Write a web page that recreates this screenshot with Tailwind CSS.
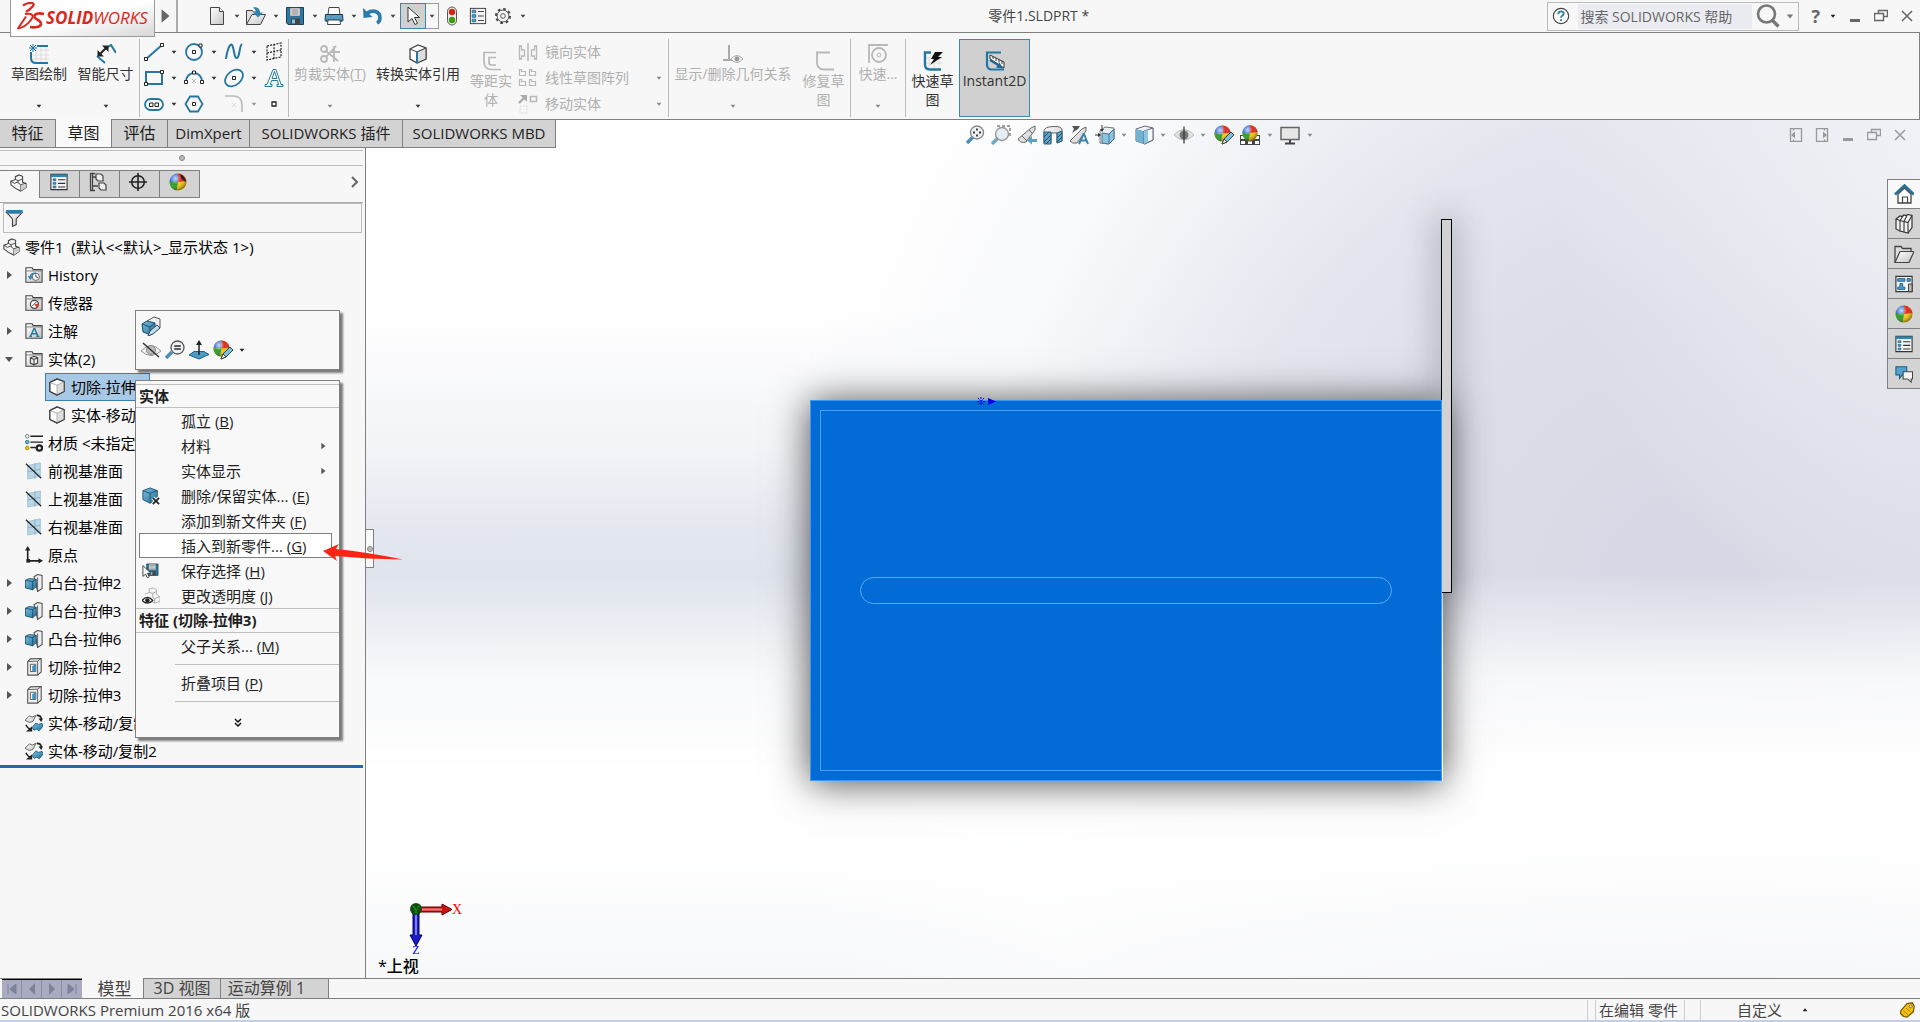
<!DOCTYPE html>
<html lang="zh-CN">
<head>
  <meta charset="UTF-8">
  <title>零件1.SLDPRT - SOLIDWORKS</title>
  <script src="https://cdn.jsdelivr.net/npm/@tailwindcss/browser@4"></script>
</head>
<body class="relative flex h-screen flex-col overflow-hidden bg-[#f7f7f7] font-['Open_Sans','Noto_Sans_CJK_SC',sans-serif] text-[15px] leading-5 text-[#1e1e1e]">

  <!-- icon sprite -->
  <svg class="absolute size-0">
    <defs>
      <linearGradient id="g-paper" x1="0" y1="0" x2="1" y2="1"><stop offset="0" stop-color="#fff"/><stop offset="1" stop-color="#c4c4c4"/></linearGradient>
      <linearGradient id="g-blue" x1="0" y1="0" x2="1" y2="1"><stop offset="0" stop-color="#7cc0e0"/><stop offset="1" stop-color="#256f98"/></linearGradient>
      <radialGradient id="g-shine" cx=".35" cy=".3" r=".7"><stop offset="0" stop-color="#fff" stop-opacity=".75"/><stop offset=".5" stop-color="#fff" stop-opacity="0"/><stop offset="1" stop-color="#000" stop-opacity=".4"/></radialGradient>
    </defs>
    <symbol id="i-down" viewBox="0 0 10 10"><path d="M1 3h8L5 8z" fill="currentColor"/></symbol>
    <symbol id="i-right" viewBox="0 0 10 10"><path d="M3 1l5 4-5 4z" fill="currentColor"/></symbol>
    <symbol id="i-new" viewBox="0 0 20 20"><path d="M3.500 1.500h9l4 4v13h-13z" fill="url(#g-paper)" stroke="#444"/><path d="M12.500 1.500v4h4" fill="#fff" stroke="#444"/></symbol>
    <symbol id="i-open" viewBox="0 0 20 20"><path d="M.5 18.500v-14h6l1 1.500h5V9" fill="#ddd" stroke="#444"/><path d="M.5 18.500L6 8.500h13.500l-5 10z" fill="url(#g-paper)" stroke="#444"/><path d="M7 1.500c5-1 7 2 7 5h3l-5 5-5-5h3c0-2-1-3-3-5z" fill="#2e84ae"/></symbol>
    <symbol id="i-save" viewBox="0 0 20 20"><path d="M1.500 1.500h17v17H3l-1.500-1.500z" fill="#2b78a1" stroke="#1d3f55"/><path d="M5 2h10v8H5z" fill="#eee" stroke="#555" stroke-width=".6"/><path d="M6.500 4h7M6.500 6h7M6.500 8h7" stroke="#777"/><path d="M6 12.500h9v6H6z" fill="#444"/><path d="M7 13.500h3v4H7z" fill="#7cc0e0"/></symbol>
    <symbol id="i-print" viewBox="0 0 20 20"><path d="M5 1.500h10l1 7H4z" fill="#fff" stroke="#444"/><path d="M1.500 8.500h17l.5 6H1z" fill="#5a9dc0" stroke="#234"/><path d="M1.500 13.500h17v2.500h-17z" fill="#256f98"/><path d="M4 14h12l.5 4.500h-13z" fill="#fff" stroke="#444"/></symbol>
    <symbol id="i-undo" viewBox="0 0 20 20"><path d="M4 7c7-4 13-1 13 5 0 2-1 4-3 5" fill="none" stroke="#2b7cab" stroke-width="3.600"/><path d="M0 2l.5 10 9-1z" fill="#2b7cab"/></symbol>
    <symbol id="i-cursor" viewBox="0 0 20 20"><path d="M5 1v15l4-3.500 3 6 2.500-1.200-3-5.800h5z" fill="#fff" stroke="#333"/></symbol>
    <symbol id="i-traffic" viewBox="0 0 20 20"><rect x="5.500" y="1" width="9" height="18" rx="4.500" fill="#eee" stroke="#555"/><circle cx="10" cy="6" r="3.200" fill="#d7260d"/><circle cx="10" cy="14" r="3.200" fill="#3f9b14"/></symbol>
    <symbol id="i-list" viewBox="0 0 20 20"><rect x="1.500" y="1.500" width="17" height="17" fill="#f3f3f3" stroke="#333"/><path d="M3.500 3.500h4v3h-4zM3.500 8.500h4v3h-4zM3.500 13.500h4v3h-4z" fill="#49a0cc" stroke="#1e5f84" stroke-width=".8"/><path d="M10 5h6.500M10 10h6.500M10 15h6.500" stroke="#333"/></symbol>
    <symbol id="i-gear" viewBox="0 0 20 20"><circle cx="10" cy="10" r="7.800" fill="none" stroke="#444" stroke-width="2.200" stroke-dasharray="3 3.120"/><circle cx="10" cy="10" r="6.600" fill="#f4f4f4" stroke="#444"/><circle cx="10" cy="10" r="2.600" fill="#fff" stroke="#444"/></symbol>
    <symbol id="i-help" viewBox="0 0 20 20"><circle cx="10" cy="10" r="8.500" fill="#fff" stroke="#444" stroke-width="1.300"/><path d="M7 8c0-4 6-4 6-.5 0 2-3 2-3 4.500M10 13.500v2" fill="none" stroke="#2a7ba4" stroke-width="2"/></symbol>
    <symbol id="i-search" viewBox="0 0 24 24"><circle cx="10.500" cy="10" r="8.500" fill="none" stroke="#777" stroke-width="2.600"/><path d="M16.500 16.500l6 6" stroke="#777" stroke-width="3.400"/></symbol>
    <symbol id="i-min" viewBox="0 0 14 14"><path d="M2 10h10v3H2z" fill="currentColor"/></symbol>
    <symbol id="i-restore" viewBox="0 0 14 14"><path d="M4.500 4.500v-3h9v6h-4M.5 4.500h9v7h-9z" fill="none" stroke="currentColor" stroke-width="1.400"/></symbol>
    <symbol id="i-close" viewBox="0 0 14 14"><path d="M2 2l10 10M12 2L2 12" stroke="currentColor" stroke-width="1.500"/></symbol>
    <symbol id="i-paneL" viewBox="0 0 14 14"><path d="M1.500.5h11v13h-11zM4.500.5v2M4.500 11.500v2" fill="none" stroke="currentColor" stroke-width="1.300"/><path d="M6 3.500v7L2 7z" fill="currentColor"/></symbol>
    <symbol id="i-paneR" viewBox="0 0 14 14"><path d="M1.500.5h11v13h-11zM9.500.5v2M9.500 11.500v2" fill="none" stroke="currentColor" stroke-width="1.300"/><path d="M8 3.500v7l4-3.500z" fill="currentColor"/></symbol>

    <!-- sketch ribbon -->
    <symbol id="i-sketch" viewBox="0 0 20 20"><path d="M7 1v18M12 1v18M17 1v18M2 6h18M2 11h18M2 15h18" stroke="#ddd"/><path d="M19 2H8M2 8v6q0 5 5 5h12" fill="none" stroke="#2577a2" stroke-width="2"/><path d="M4 0v8M0 4h8M1 1l6 6M7 1L1 7" stroke="#2577a2"/></symbol>
    <symbol id="i-dim" viewBox="0 0 20 20"><path d="M12 3l3-2 5 8M1 12l8 7" fill="none" stroke="#2577a2" stroke-width="2"/><path d="M3 11L11 3" stroke="#222" stroke-width="2"/><path d="M6 1.500h6.500V8zM1.500 6v6.500H8z" fill="#222"/></symbol>
    <symbol id="i-line" viewBox="0 0 20 20"><path d="M2 17L18 3" stroke="#2577a2" stroke-width="2"/><path d="M.5 15.500h3v3h-3zM16.500 1.500h3v3h-3z" fill="#fff" stroke="#222"/></symbol>
    <symbol id="i-circle" viewBox="0 0 20 20"><circle cx="10" cy="10" r="8" fill="none" stroke="#2577a2" stroke-width="1.800"/><path d="M8.500 8.500h3v3h-3zM15 2h3v3h-3z" fill="#fff" stroke="#222"/></symbol>
    <symbol id="i-spline" viewBox="0 0 20 20"><path d="M2 17C3 8 6 1 8 3s2 14 5 13 2-12 5-14" fill="none" stroke="#2577a2" stroke-width="2"/></symbol>
    <symbol id="i-plane" viewBox="0 0 20 20"><path d="M3 4l14-3v14L3 18zM10 2v15M3 11l14-3" fill="none" stroke="#222" stroke-width="1.200" stroke-dasharray="2 1.200"/></symbol>
    <symbol id="i-rect" viewBox="0 0 20 20"><path d="M2 4h16v12H2z" fill="none" stroke="#2577a2" stroke-width="2"/><path d="M.5 14.500h3v3h-3zM16.500 2.500h3v3h-3z" fill="#fff" stroke="#222"/></symbol>
    <symbol id="i-arc" viewBox="0 0 20 20"><path d="M2 14C2 2 18 2 18 14" fill="none" stroke="#2577a2" stroke-width="1.800"/><path d="M8 11l4 4M12 11l-4 4" stroke="#bbb"/><path d="M8.500 3h3v3h-3zM.5 12.500h3v3h-3zM16.500 12.500h3v3h-3z" fill="#fff" stroke="#222"/></symbol>
    <symbol id="i-ellipse" viewBox="0 0 20 20"><ellipse cx="10" cy="10" rx="10" ry="7" transform="rotate(-40 10 10)" fill="none" stroke="#2577a2" stroke-width="1.800"/><path d="M8.500 8.500h3v3h-3z" fill="#fff" stroke="#222"/></symbol>
    <symbol id="i-letter" viewBox="0 0 20 20"><path d="M9 1.500h3l5 15h2v2h-6v-2h1.500l-1-4h-6l-1.200 4H8v2H1v-2h2zM8 10.500h5l-2.500-7z" fill="#fff" stroke="#2577a2"/></symbol>
    <symbol id="i-slot" viewBox="0 0 20 20"><rect x="1" y="5" width="18" height="11" rx="5.500" fill="none" stroke="#2577a2" stroke-width="1.800"/><path d="M5.500 9h3.500v3.500H5.500zM11 9h3.500v3.500H11z" fill="#fff" stroke="#222"/></symbol>
    <symbol id="i-hex" viewBox="0 0 20 20"><path d="M1.500 10L6 2.500h8l4.500 7.500L14 17.500H6z" fill="none" stroke="#2577a2" stroke-width="1.800"/><path d="M8.500 8.500h3v3h-3z" fill="#fff" stroke="#222"/></symbol>
    <symbol id="i-fillet" viewBox="0 0 20 20"><path d="M1 2h8q9 0 9 9v7" fill="none" stroke="#bbb" stroke-width="1.600"/><path d="M8 9l4 4M12 9l-4 4" stroke="#ddd"/></symbol>
    <symbol id="i-point" viewBox="0 0 20 20"><path d="M8 8h4v4H8z" fill="#fff" stroke="#222" stroke-width="1.300"/></symbol>
    <symbol id="i-trim" viewBox="0 0 20 20"><g fill="none" stroke="#b8b8b8" stroke-width="1.800"><circle cx="4" cy="5" r="3"/><circle cx="4" cy="15" r="3"/><path d="M6 13L16 2M6 7l12 10M10 8h10M14 2v16"/></g></symbol>
    <symbol id="i-convert" viewBox="0 0 20 20"><path d="M2 5l8-4 8 3v11l-9 4-7-4z" fill="#fff" stroke="#444" stroke-width="1.300"/><path d="M2 5l7 3 9-4" fill="none" stroke="#444"/><path d="M9 8l9-4v11l-9 4z" fill="#ddd" stroke="#444"/><path d="M9 8v11" stroke="#2577a2" stroke-width="2"/></symbol>
    <symbol id="i-offset" viewBox="0 0 20 20"><path d="M15 1.500H3v9q0 8 8 8h9M15 6.500H8v5q0 2.500 3 2.500h4" fill="none" stroke="#b8b8b8" stroke-width="1.700"/></symbol>
    <symbol id="i-mirror" viewBox="0 0 20 20"><path d="M10 1v18" stroke="#b8b8b8" stroke-width="1.500"/><path d="M1.500 4h2v4h3v6h-3v3h-2zM18.500 4h-2v4h-3v6h3v3h2z" fill="none" stroke="#b8b8b8" stroke-width="1.300"/></symbol>
    <symbol id="i-pattern" viewBox="0 0 20 20"><path d="M1.500 1.500h2v2h4v4h-6zM11.500 1.500h2v2h4v4h-6zM1.500 11.500h2v2h4v4h-6zM11.500 11.500h2v2h4v4h-6z" fill="none" stroke="#b8b8b8" stroke-width="1.200"/></symbol>
    <symbol id="i-move" viewBox="0 0 20 20"><path d="M1 9l5-5" stroke="#aaa" stroke-width="2.400"/><path d="M2 1h7v7z" fill="#aaa"/><path d="M12.500 2.500h6v5h-6z" fill="none" stroke="#b8b8b8" stroke-width="1.600"/><path d="M2 12h7v7H2z" fill="none" stroke="#ddd" stroke-dasharray="2 1"/></symbol>
    <symbol id="i-relation" viewBox="0 0 20 20"><path d="M6 1v15M0 16h10" stroke="#aaa" stroke-width="2"/><path d="M8 15q6-7 12 0-6 7-12 0z" fill="#f7f7f7" stroke="#aaa"/><circle cx="14" cy="15" r="2.400" fill="#999"/></symbol>
    <symbol id="i-repair" viewBox="0 0 20 20"><path d="M16 1.500H3v10q0 7 7 7h10" fill="none" stroke="#b8b8b8" stroke-width="1.800"/></symbol>
    <symbol id="i-snap" viewBox="0 0 20 20"><path d="M1 19V1h19" fill="none" stroke="#b8b8b8" stroke-width="1.800"/><circle cx="11" cy="11" r="7" fill="none" stroke="#b8b8b8" stroke-width="1.800"/><circle cx="11" cy="11" r="2" fill="none" stroke="#b8b8b8"/></symbol>
    <symbol id="i-rapid" viewBox="0 0 20 20"><path d="M6 5v14M11 5v14M16 5v14M4 7h16M4 12h16" stroke="#ddd"/><path d="M8 1.500H2v12q0 5 5 5h11" fill="none" stroke="#2577a2" stroke-width="2.400"/><path d="M12 1h8l-5 5h4L7 14l4-6H8z" fill="#111"/></symbol>
    <symbol id="i-instant" viewBox="0 0 20 20"><path d="M16 1.500H2v12q0 5 5 5h12" fill="none" stroke="#2577a2" stroke-width="2.200"/><path d="M5 4l14 7v6L5 8z" fill="#fff" stroke="#333"/><path d="M8 5.500V8M11 7v3M14 8.500v3M17 10v3" stroke="#333"/><path d="M5 9l10 6" stroke="#1e6690" stroke-width="2.200"/><path d="M18 17.500l-7-1 3.500-5z" fill="#1e6690"/></symbol>

    <!-- view toolbar -->
    <symbol id="i-zoomfit" viewBox="0 0 20 20"><path d="M2 18l6-6" stroke="#4d8fb3" stroke-width="3.500"/><circle cx="12" cy="7.500" r="6.500" fill="#eef2f5" stroke="#8a8a8a" stroke-width="1.400"/><path d="M12 3.500v2M12 9.500v2M8 7.500h2M14 7.500h2" stroke="#333" stroke-width="1.800"/></symbol>
    <symbol id="i-zoomarea" viewBox="0 0 20 20"><path d="M6 1h13v12" fill="none" stroke="#444" stroke-dasharray="3 2"/><path d="M1 19l6-6" stroke="#6fa8c6" stroke-width="3.500"/><circle cx="11" cy="9" r="6.500" fill="#e6edf2" stroke="#999" stroke-width="1.400"/></symbol>
    <symbol id="i-prev" viewBox="0 0 20 20"><path d="M1 14L14 3l4-2v4L9 17q-5 2-8-3z" fill="url(#g-paper)" stroke="#666"/><path d="M5 11l5 5M12 5l3 3" stroke="#666"/><path d="M20 14h-5v-3l-5 4.500 5 4V17h5z" fill="#5f9fbf"/></symbol>
    <symbol id="i-section" viewBox="0 0 20 20"><path d="M1 6q0-4 9-4.500T19 5v11l-5 2V8H8v10H1z" fill="url(#g-paper)" stroke="#666"/><path d="M1 7h7v12H1zM14 8l5-2v10l-5 2z" fill="#5fa3c6" stroke="#2b5f7c"/><path d="M1 12l5-5M1 17l7-7M3 19l5-5M14 13l5-5M14 17l5-5" stroke="#20506c"/></symbol>
    <symbol id="i-dynview" viewBox="0 0 20 20"><path d="M1 16L13 4l4-2v4L8 18q-5 1-7-2z" fill="url(#g-paper)" stroke="#666"/><path d="M3 1h8L9 4l-6 4 2-4z" fill="#555"/><path d="M10 19L14.500 9h.5l4 10M11.500 15.500h6" stroke="#3c84ab" stroke-width="2" fill="none"/></symbol>
    <symbol id="i-orient" viewBox="0 0 20 20"><path d="M5 6l5-4 9 1v11l-5 5-9-1z" fill="#e8eef2" stroke="#777"/><path d="M7 8l7 1 5-5v10l-5 5-7-1z" fill="#8cc3de" stroke="#4b7890"/><path d="M14 9v10" stroke="#4b7890"/><path d="M7 0v4M0 10h4" stroke="#333"/><path d="M5 4h4L7 7zM3 8v4l3-2z" fill="#333"/></symbol>
    <symbol id="i-display" viewBox="0 0 20 20"><path d="M2 4l9-3 8 2v12l-8 4-9-3z" fill="#eef4f7" stroke="#667"/><path d="M2 4l8 2v13l-8-3z" fill="#6fb2d2"/><path d="M10 6l9-3v12l-9 4z" fill="#f5fafc" stroke="#667"/><path d="M10 6l4-1.500V17l-4 2z" fill="#8cc6e0"/></symbol>
    <symbol id="i-eye" viewBox="0 0 20 20"><path d="M0 10q10-11 20 0-10 10-20 0z" fill="#e2e2e2" stroke="#bbb"/><circle cx="10" cy="10" r="4.500" fill="#777"/><path d="M10 1.500v17" stroke="#333" stroke-width="1.200"/></symbol>
    <symbol id="i-ball" viewBox="0 0 20 20"><circle cx="10" cy="10" r="8.500" fill="#f2c511"/><path d="M10 10V1.500A8.500 8.500 0 0 1 18.500 9z" fill="#dd2a1b"/><path d="M10 10V1.500A8.500 8.500 0 0 0 1.500 10z" fill="#2f68d8"/><path d="M10 10H1.500a8.500 8.500 0 0 0 7 8.400z" fill="#2c9c2c"/><circle cx="10" cy="10" r="8.500" fill="url(#g-shine)"/></symbol>
    <symbol id="i-ballpen" viewBox="0 0 20 20"><use href="#i-ball" x="-1" y="-1" width="19" height="19"/><path d="M8 19l2-5 7-7 3 3-7 7z" fill="#7cc0e0" stroke="#345"/><path d="M8 19l2-5 3 3z" fill="#eee" stroke="#444"/></symbol>
    <symbol id="i-scene" viewBox="0 0 20 20"><path d="M0 10h20v10H0z" fill="#444"/><path d="M1 11h4v3H1zM1 16h4v3H1zM15 11h4v3h-4zM15 16h4v3h-4zM8 16.500h4V19H8z" fill="#fff"/><use href="#i-ball" x="1" y="-1" width="18" height="18"/></symbol>
    <symbol id="i-monitor" viewBox="0 0 20 20"><path d="M1 2.500h18v12H1z" fill="#e6e6e6" stroke="#666" stroke-width="1.500"/><path d="M10 15v3M5 18.500h10" stroke="#444" stroke-width="2"/></symbol>

    <!-- feature tree -->
    <symbol id="i-part" viewBox="0 0 20 20"><path d="M1 8l5-2V3l4-2 4 1.500V9l4 2v4l-6 4-6-3-5-4z" fill="#f1f1f1" stroke="#444" stroke-width="1.200"/><path d="M1 8l4 2.500L8 9l4 3v7M6 6l3 1.500 5-2M9 7.500V10M12 12l6-2" fill="none" stroke="#444"/><path d="M12 13l6-2v4l-6 4z" fill="#ccc"/></symbol>
    <symbol id="i-props" viewBox="0 0 20 20"><path d="M1 1.500h18v17H1z" fill="#f3f3f3" stroke="#333" stroke-width="1.200"/><path d="M1 1.500h18v3H1z" fill="#2f86b2"/><path d="M3.500 6.500h3v2h-3zM3.500 10.500h3v2h-3zM3.500 14.500h3v2h-3z" fill="#49a0cc" stroke="#1e5f84" stroke-width=".8"/><path d="M9 7.500h8M9 11.500h8M9 15.500h8" stroke="#333" stroke-width="1.200"/></symbol>
    <symbol id="i-config" viewBox="0 0 20 20"><path d="M7 1.500H2.500v17H7M4.500 1.500v17M5 14h5M5 5h4" fill="none" stroke="#444" stroke-width="1.300"/><path d="M8 2h5l2 2v5h-5L8 7zM11 11h5l2 2v5h-5l-2-2z" fill="#eee" stroke="#444" stroke-width="1.200"/></symbol>
    <symbol id="i-target" viewBox="0 0 20 20"><circle cx="10" cy="10" r="7" fill="none" stroke="#222" stroke-width="1.800"/><path d="M10 0v20M0 10h20" stroke="#222" stroke-width="1.800"/></symbol>
    <symbol id="i-appear" viewBox="0 0 20 20"><use href="#i-ball" width="20" height="20"/><path d="M12 2q5 2 6 8-5-2-6-8z" fill="#222"/></symbol>
    <symbol id="i-filter" viewBox="0 0 20 20"><path d="M1.500 4h17L12 11v6l-4 2v-8z" fill="url(#g-paper)" stroke="#444" stroke-width="1.200"/><path d="M1 1.500h18l-1 4H2z" fill="#2a7fab"/></symbol>
    <symbol id="i-folder" viewBox="0 0 20 20"><path d="M1 18V2h7l1 2h10v14z" fill="url(#g-paper)" stroke="#444" stroke-width="1.200"/><path d="M1 5.500h18" stroke="#777"/></symbol>
    <symbol id="i-history" viewBox="0 0 20 20"><use href="#i-folder" width="20" height="20"/><circle cx="12" cy="12" r="4" fill="#fff" stroke="#555"/><path d="M12 9.500V12l2.500 1" stroke="#333" fill="none"/><path d="M12 8q-6 0-6 4" fill="none" stroke="#2a7fab" stroke-width="1.800"/><path d="M3 11.500h6l-3 4z" fill="#2a7fab"/></symbol>
    <symbol id="i-sensor" viewBox="0 0 20 20"><use href="#i-folder" width="20" height="20"/><circle cx="10.500" cy="11.500" r="4.500" fill="#fff" stroke="#444" stroke-width="1.300"/><path d="M10.500 11.500l2.500 4a4.500 4.500 0 0 0 2-5z" fill="#d9432b"/><path d="M8 13.500l5-5" stroke="#333"/></symbol>
    <symbol id="i-anno" viewBox="0 0 20 20"><use href="#i-folder" width="20" height="20"/><path d="M6 16L10 7.500h.8L14.500 16M7.500 13h6M4.800 16h3M12.500 16H16" fill="none" stroke="#2577a2" stroke-width="1.600"/></symbol>
    <symbol id="i-bodies" viewBox="0 0 20 20"><use href="#i-folder" width="20" height="20"/><path d="M6 8.500L10 7l4 1.500v6l-4 2-4-2zM6 8.500l4 2 4-2M10 10.500v6" fill="#eee" stroke="#444" stroke-width="1.200"/></symbol>
    <symbol id="i-body" viewBox="0 0 20 20"><path d="M2 5l8-4 8 3v11l-8 4-8-4z" fill="#fff" stroke="#444" stroke-width="1.200"/><path d="M10 8l8-4v11l-8 4z" fill="#ddd"/><path d="M2 5l8 3 8-4M10 8v11" fill="none" stroke="#aaa"/><path d="M2 5l8-4 8 3v11l-8 4-8-4z" fill="none" stroke="#444" stroke-width="1.200"/></symbol>
    <symbol id="i-material" viewBox="0 0 20 20"><path d="M6 2.500h14M6 9h14M6 15h6" stroke="#222" stroke-width="1.500"/><circle cx="2.500" cy="2.500" r="2" fill="#eee" stroke="#777"/><circle cx="2.500" cy="9" r="2" fill="#5ab4dc" stroke="#377"/><circle cx="2.500" cy="15.500" r="2" fill="#f0c020" stroke="#a80"/><circle cx="16" cy="15.500" r="3" fill="none" stroke="#222" stroke-width="2.500"/></symbol>
    <symbol id="i-refplane" viewBox="0 0 20 20"><path d="M3 4l14-3v15L3 19z" fill="#b9d6e6" stroke="#9dbfd1"/><path d="M11 1v18M3 11l14-3" stroke="#7fa5ba" stroke-width=".8"/><path d="M1 2l17 16" stroke="#222" stroke-width="1.300"/></symbol>
    <symbol id="i-origin" viewBox="0 0 20 20"><path d="M3 4v12.500h13" fill="none" stroke="#222" stroke-width="1.800"/><path d="M0 5l3-5 3 5zM15 13.500l5 3-5 3z" fill="#222"/><path d="M1.500 14.500h4v4h-4z" fill="#222"/></symbol>
    <symbol id="i-boss" viewBox="0 0 20 20"><path d="M10 3l4-2.500 5 1V16l-5 3.500z" fill="#eee" stroke="#555" stroke-width="1.200"/><path d="M14 4v15" stroke="#555"/><path d="M.5 7l4-2 8 1v8l-4 3.500-8-2z" fill="url(#g-blue)" stroke="#1d4f6c"/><path d="M.5 7l8 1.500 4-2.500M8.500 8.500v9" fill="none" stroke="#1d4f6c"/></symbol>
    <symbol id="i-cut" viewBox="0 0 20 20"><path d="M3 4l3-3 12-.5v15L14 19H3z" fill="#eee" stroke="#555" stroke-width="1.200"/><path d="M3 4l11-.5L18 .5M14 3.500V19" fill="none" stroke="#555"/><path d="M6 7h6v8H6z" fill="#fff" stroke="#555"/><path d="M8 9l4-2v8H8z" fill="#3b94c0"/></symbol>
    <symbol id="i-movecopy" viewBox="0 0 20 20"><path d="M0 7l5-5 3 1.500 4-2-3 6.500-4 1.500-2-1z" fill="url(#g-paper)" stroke="#555"/><path d="M8 15l4-5 3 1.500 4-1 1 3-4 5-3-1.500-3 1z" fill="url(#g-blue)" stroke="#1e5f84"/><path d="M13 1.500q5 0 5 4" fill="none" stroke="#222" stroke-width="1.800"/><path d="M15 5h5l-2 4zM1 19.500h7v-6z" fill="#222"/><path d="M1 12q1 3 5 5" stroke="#222" stroke-width="1.600" fill="none"/></symbol>

    <!-- context menu and task pane -->
    <symbol id="i-editfeat" viewBox="0 0 20 20"><path d="M6 5l7-4 6 2v9l-6 4z" fill="#eee" stroke="#555"/><path d="M1 8l5-3 8 2v8l-4 4-8-3z" fill="url(#g-blue)" stroke="#1d4f6c"/><path d="M1 8l8 3 5-4M9 11v7" fill="none" stroke="#1d4f6c"/><path d="M7 20l2-5 7-6 3 3-7 6z" fill="#bfe0ef" stroke="#345"/></symbol>
    <symbol id="i-hide" viewBox="0 0 20 20"><path d="M0 11q10-11 20 0-10 9-20 0z" fill="#eee" stroke="#999"/><circle cx="10" cy="10" r="4.500" fill="#bbb" stroke="#888"/><path d="M2 3l16 14" stroke="#333" stroke-width="1.500"/></symbol>
    <symbol id="i-zoomsel" viewBox="0 0 20 20"><path d="M1 18l6-6" stroke="#4d8fb3" stroke-width="3.500"/><circle cx="12.500" cy="7.500" r="6.500" fill="#eef2f5" stroke="#555" stroke-width="1.300"/><path d="M9.500 5.500h6v1h-6zM9.500 8.500h6v1h-6z" fill="#333" stroke="#333" stroke-width=".6"/></symbol>
    <symbol id="i-normal" viewBox="0 0 20 20"><path d="M0 15l5-3.500h10l5 3L10 19z" fill="#4c9cc4" stroke="#1e5f84"/><path d="M10 15V3" stroke="#222" stroke-width="1.500"/><path d="M7 5l3-5 3 5z" fill="#222"/></symbol>
    <symbol id="i-delbody" viewBox="0 0 20 20"><path d="M1 4l8-3 8 3v10l-8 4-8-4z" fill="url(#g-blue)" stroke="#1d4f6c"/><path d="M1 4l8 3 8-3M9 7v11" fill="none" stroke="#1d4f6c"/><path d="M12 12l7 7M19 12l-7 7" stroke="#fff" stroke-width="4"/><path d="M12 12l7 7M19 12l-7 7" stroke="#222" stroke-width="2"/></symbol>
    <symbol id="i-savesel" viewBox="0 0 20 20"><use href="#i-save" x="4" y="1" width="15" height="15"/><path d="M1 4v12l3-2.500 2 4 2-1-2-4h4z" fill="#fff" stroke="#333"/></symbol>
    <symbol id="i-transp" viewBox="0 0 20 20"><path d="M3 8l5-2V2l5-1 3 2v5l4 3v5l-6 2-5-3" fill="#f5f5f5" stroke="#aaa"/><path d="M8 6l4 1 4-2M12 7v5l2 1 5-2M14 13v5" fill="none" stroke="#aaa"/><path d="M0 15q6-7 12 0-6 6-12 0z" fill="#fff" stroke="#222" stroke-width="1.300"/><circle cx="6" cy="15" r="2.500" fill="#222"/></symbol>
    <symbol id="i-home" viewBox="0 0 20 20"><path d="M4 10v9h13v-9l-6.500-6z" fill="#fff" stroke="#444" stroke-width="1.300"/><path d="M8.500 19v-6h5v6" fill="none" stroke="#444" stroke-width="1.200"/><path d="M1 10.500l9.500-9 9.500 9" fill="none" stroke="#256f98" stroke-width="2.600"/></symbol>
    <symbol id="i-library" viewBox="0 0 20 20"><path d="M2 5l4-3 2 .5L10 1l2 .5 2-1 4 1v12l-4 5.500-4-1-4-1-4-2z" fill="#f2f2f2" stroke="#333" stroke-width="1.200"/><path d="M2 5l4 1.500 4 1 4 1 4-7M6 6.500v11M10 7.500v11M14 8.500V19M6 6.500l3-4.500M10 7.500l3-6" fill="none" stroke="#333" stroke-width="1.100"/></symbol>
    <symbol id="i-explorer" viewBox="0 0 20 20"><path d="M1 18.500v-16h6l1.500 2H17v3" fill="#ddd" stroke="#444" stroke-width="1.300"/><path d="M1 18.500L6 7.500h14l-5 11z" fill="url(#g-paper)" stroke="#444" stroke-width="1.200"/></symbol>
    <symbol id="i-palette" viewBox="0 0 20 20"><path d="M1 1.500h18v17H1z" fill="#f3f3f3" stroke="#333" stroke-width="1.300"/><path d="M3 4h8v3H3zM13.500 4h3.500v3h-3.500zM5.500 9.500h3v4H11v2.500H3v-2.500h2.500z" fill="#49a0cc" stroke="#1e5f84"/><path d="M15 10h4v8.500h-4z" fill="#bbb" stroke="#333"/></symbol>
    <symbol id="i-forum" viewBox="0 0 20 20"><path d="M1 2h12v9H8l-3 4v-4H1z" fill="#4fa5cf" stroke="#1e5f84" stroke-width="1.200"/><path d="M9 7.500h10.500v8H18V19l-4-3.500H9z" fill="#f3f3f3" stroke="#444" stroke-width="1.200"/></symbol>
    <symbol id="i-tag" viewBox="0 0 20 20"><path d="M3 11l7-8 6-1 2 4-1 6-7 6q-4 0-7-4z" fill="#f4c20d" stroke="#7c5b00" stroke-width="1.400"/><circle cx="14" cy="6" r="1.600" fill="#fff" stroke="#7c5b00"/><path d="M6 11l5 4M9 8l5 4" stroke="#a87e00"/></symbol>
  </svg>

  <!-- title bar -->
  <header class="flex h-[33px] shrink-0 items-center border-b border-[#808080] text-[#444]">
    <div class="z-10 ml-[10px] flex h-[37px] w-[145px] items-center self-start border border-t-0 border-[#999] bg-linear-to-br from-white from-50% to-[#d8d8d8] pl-1 text-[#d9291c]">
      <svg class="h-8 w-[30px] shrink-0" viewBox="0 0 30 32" fill="none" stroke="#d9291c" stroke-linejoin="round"><path d="M8 3.500C13 0 21 0 18 4c-1.500 2-4 4-7 6" stroke-width="2.200"/><path d="M10 12c9-1.500 9 3 5 7-3 4-7 6.500-12 7.500l8-12" stroke-width="2"/><path d="M29 12c-6-1.500-10 0-9.500 3 .5 2.500 7 3.500 6.500 7-.5 3-6 4-11 3" stroke-width="2.600"/></svg>
      <span class="ml-px text-[17px] leading-5 italic"><b>SOLID</b>WORKS</span>
    </div>
    <button aria-label="菜单" class="flex h-8 w-[23px] items-center justify-center border-r-2 border-[#aaa] pr-0.5 text-[#666]"><svg class="h-4 w-3" viewBox="0 0 10 14"><path d="M2 1l7 6-7 6z" fill="currentColor"/></svg></button>
    <nav class="ml-[27px] flex items-center text-[#444]">
      <button aria-label="新建" class="flex w-6 justify-center"><svg class="size-5"><use href="#i-new"/></svg></button>
      <button aria-label="新建选项" class="flex w-[15px] justify-center"><svg class="size-1.5"><use href="#i-down"/></svg></button>
      <button aria-label="打开" class="flex w-6 justify-center"><svg class="size-5"><use href="#i-open"/></svg></button>
      <button aria-label="打开选项" class="flex w-[15px] justify-center"><svg class="size-1.5"><use href="#i-down"/></svg></button>
      <button aria-label="保存" class="flex w-6 justify-center"><svg class="size-5"><use href="#i-save"/></svg></button>
      <button aria-label="保存选项" class="flex w-[15px] justify-center"><svg class="size-1.5"><use href="#i-down"/></svg></button>
      <button aria-label="打印" class="flex w-6 justify-center"><svg class="size-5"><use href="#i-print"/></svg></button>
      <button aria-label="打印选项" class="flex w-[15px] justify-center"><svg class="size-1.5"><use href="#i-down"/></svg></button>
      <button aria-label="撤消" class="flex w-6 justify-center"><svg class="size-5"><use href="#i-undo"/></svg></button>
      <button aria-label="撤消选项" class="flex w-[15px] justify-center"><svg class="size-1.5"><use href="#i-down"/></svg></button>
      <button aria-label="选择" class="flex h-[26px] w-[26px] items-center justify-center border border-[#3f87b3] bg-[#d0d0d0]"><svg class="size-5"><use href="#i-cursor"/></svg></button>
      <button aria-label="选择选项" class="flex h-[26px] w-[13px] items-center justify-center border border-l-0 border-[#999]"><svg class="size-1.5"><use href="#i-down"/></svg></button>
      <button aria-label="重建模型" class="flex w-[26px] justify-center"><svg class="size-5"><use href="#i-traffic"/></svg></button>
      <button aria-label="文件属性" class="flex w-[26px] justify-center"><svg class="size-[18px]"><use href="#i-list"/></svg></button>
      <button aria-label="选项" class="flex w-6 justify-center"><svg class="size-[18px]"><use href="#i-gear"/></svg></button>
      <button aria-label="更多选项" class="flex w-[15px] justify-center"><svg class="size-1.5"><use href="#i-down"/></svg></button>
    </nav>
    <h1 class="flex-1 text-center text-sm">零件1.SLDPRT *</h1>
    <form class="flex h-[29px] w-[252px] items-center border border-[#bbb]">
      <svg class="ml-1 size-[18px]"><use href="#i-help"/></svg>
      <input type="text" aria-label="搜索帮助" placeholder="搜索 SOLIDWORKS 帮助" class="ml-2 h-[25px] w-[174px] bg-[#ebecf1] pl-0.5 text-sm placeholder:text-[#666]">
      <button type="button" aria-label="搜索" class="ml-1"><svg class="size-6"><use href="#i-search"/></svg></button>
      <button type="button" aria-label="搜索选项" class="ml-1.5 text-[#777]"><svg class="size-2"><use href="#i-down"/></svg></button>
    </form>
    <div class="flex items-center pr-1.5 pl-3 text-[#666]">
      <button aria-label="帮助" class="text-lg font-bold">?</button>
      <button aria-label="帮助选项" class="ml-2.5 text-[#222]"><svg class="size-1.5"><use href="#i-down"/></svg></button>
      <button aria-label="最小化" class="ml-3"><svg class="size-3.5"><use href="#i-min"/></svg></button>
      <button aria-label="还原" class="ml-3"><svg class="size-3.5"><use href="#i-restore"/></svg></button>
      <button aria-label="关闭" class="ml-3"><svg class="size-3.5"><use href="#i-close"/></svg></button>
    </div>
  </header>

  <!-- ribbon -->
  <section class="flex h-[87px] shrink-0 border-r border-b border-[#808080] pl-1.5 text-sm leading-5 text-[#333]">
    <button class="flex w-[66px] flex-col items-center pt-[11px] pb-2.5"><svg class="size-5 shrink-0"><use href="#i-sketch"/></svg>草图绘制<svg class="mt-auto size-1.5"><use href="#i-down"/></svg></button>
    <button class="flex w-[67px] flex-col items-center pt-[11px] pb-2.5"><svg class="size-5 shrink-0"><use href="#i-dim"/></svg>智能尺寸<svg class="mt-auto size-1.5"><use href="#i-down"/></svg></button>
    <div class="mt-1.5 mb-0.5 border-l border-[#bbb]"></div>
    <div class="ml-1 grid grid-cols-[repeat(7,20px)] grid-rows-[repeat(3,26px)] place-items-center pt-1.5">
      <button aria-label="直线"><svg class="size-5"><use href="#i-line"/></svg></button>
      <button aria-label="直线选项"><svg class="size-1.5"><use href="#i-down"/></svg></button>
      <button aria-label="圆"><svg class="size-5"><use href="#i-circle"/></svg></button>
      <button aria-label="圆选项"><svg class="size-1.5"><use href="#i-down"/></svg></button>
      <button aria-label="样条曲线"><svg class="size-5"><use href="#i-spline"/></svg></button>
      <button aria-label="样条曲线选项"><svg class="size-1.5"><use href="#i-down"/></svg></button>
      <button aria-label="基准面"><svg class="size-5"><use href="#i-plane"/></svg></button>
      <button aria-label="矩形"><svg class="size-5"><use href="#i-rect"/></svg></button>
      <button aria-label="矩形选项"><svg class="size-1.5"><use href="#i-down"/></svg></button>
      <button aria-label="圆弧"><svg class="size-5"><use href="#i-arc"/></svg></button>
      <button aria-label="圆弧选项"><svg class="size-1.5"><use href="#i-down"/></svg></button>
      <button aria-label="椭圆"><svg class="size-5"><use href="#i-ellipse"/></svg></button>
      <button aria-label="椭圆选项"><svg class="size-1.5"><use href="#i-down"/></svg></button>
      <button aria-label="文字"><svg class="size-5"><use href="#i-letter"/></svg></button>
      <button aria-label="槽口"><svg class="size-5"><use href="#i-slot"/></svg></button>
      <button aria-label="槽口选项"><svg class="size-1.5"><use href="#i-down"/></svg></button>
      <button aria-label="多边形"><svg class="size-5"><use href="#i-hex"/></svg></button>
      <span></span>
      <button aria-label="圆角"><svg class="size-5"><use href="#i-fillet"/></svg></button>
      <button aria-label="圆角选项" class="text-[#999]"><svg class="size-1.5"><use href="#i-down"/></svg></button>
      <button aria-label="点"><svg class="size-5"><use href="#i-point"/></svg></button>
    </div>
    <div class="mt-1.5 mb-0.5 ml-1 border-l border-[#bbb]"></div>
    <button class="flex w-[82px] flex-col items-center pt-[11px] pb-2.5 text-[#b0b0b0]"><svg class="size-5 shrink-0"><use href="#i-trim"/></svg><span>剪裁实体(<u>T</u>)</span><svg class="mt-auto size-1.5 text-[#888]"><use href="#i-down"/></svg></button>
    <button class="flex w-[94px] flex-col items-center pt-[11px] pb-2.5"><svg class="size-5 shrink-0"><use href="#i-convert"/></svg>转换实体引用<svg class="mt-auto size-1.5"><use href="#i-down"/></svg></button>
    <button class="flex w-[52px] flex-col items-center px-1 pt-[18px] leading-[19px] text-[#b0b0b0]"><svg class="size-5 shrink-0"><use href="#i-offset"/></svg>等距实体</button>
    <div class="flex w-[151px] flex-col pt-1.5 pl-px text-[#b0b0b0]">
      <button class="flex h-[26px] items-center gap-[7px]"><svg class="size-5"><use href="#i-mirror"/></svg>镜向实体</button>
      <button class="flex h-[26px] items-center gap-[7px]"><svg class="size-5"><use href="#i-pattern"/></svg>线性草图阵列<svg class="mr-1.5 ml-auto size-1.5 text-[#888]"><use href="#i-down"/></svg></button>
      <button class="flex h-[26px] items-center gap-[7px]"><svg class="size-5"><use href="#i-move"/></svg>移动实体<svg class="mr-1.5 ml-auto size-1.5 text-[#888]"><use href="#i-down"/></svg></button>
    </div>
    <div class="mt-1.5 mb-0.5 border-l border-[#bbb]"></div>
    <button class="flex w-32 flex-col items-center pt-[11px] pb-2.5 text-[#b0b0b0]"><svg class="size-5 shrink-0"><use href="#i-relation"/></svg>显示/删除几何关系<svg class="mt-auto size-1.5 text-[#888]"><use href="#i-down"/></svg></button>
    <button class="flex w-[53px] flex-col items-center px-1 pt-[18px] leading-[19px] text-[#b0b0b0]"><svg class="size-5 shrink-0"><use href="#i-repair"/></svg>修复草图</button>
    <div class="mt-1.5 mb-0.5 border-l border-[#bbb]"></div>
    <button class="flex w-[54px] flex-col items-center pt-[11px] pb-2.5 text-[#b0b0b0]"><svg class="size-5 shrink-0"><use href="#i-snap"/></svg>快速...<svg class="mt-auto size-1.5 text-[#888]"><use href="#i-down"/></svg></button>
    <div class="mt-1.5 mb-0.5 border-l border-[#bbb]"></div>
    <button class="flex w-[53px] flex-col items-center px-1 pt-[18px] leading-[19px]"><svg class="size-5 shrink-0"><use href="#i-rapid"/></svg>快速草图</button>
    <button class="mt-1.5 mb-0.5 flex w-[71px] flex-col items-center border border-[#3f87b3] bg-[#d0d0d0] pt-[11px] leading-[19px]"><svg class="size-5 shrink-0"><use href="#i-instant"/></svg>Instant2D</button>
  </section>

  <main class="relative flex min-h-0 flex-1">
    <!-- command tabs, over the panel and the viewport -->
    <nav class="absolute top-0 left-0 z-10 flex h-7 border-b border-[#808080] text-base leading-[27px]">
      <button class="w-14 border-r border-[#808080] bg-[#d3d3d3]">特征</button>
      <button class="-mt-px w-[55px] bg-[#f9f9f9] pt-px">草图</button>
      <button class="w-[57px] border-x border-[#808080] bg-[#d3d3d3]">评估</button>
      <button class="w-[82px] border-r border-[#808080] bg-[#d3d3d3] text-[15px]">DimXpert</button>
      <button class="w-[153px] border-r border-[#808080] bg-[#d3d3d3] text-[15px]">SOLIDWORKS 插件</button>
      <button class="w-[153px] border-r border-[#808080] bg-[#d3d3d3] text-[15px]">SOLIDWORKS MBD</button>
    </nav>

    <!-- feature manager -->
    <aside class="flex w-[366px] shrink-0 flex-col border-r border-[#808080] pt-[30px]">
      <div class="mr-0.5 flex h-4 items-center justify-center border-y border-[#bbb]"><span class="size-1.5 rounded-full border border-[#888] bg-[#bbb]"></span></div>
      <div class="mt-1 mr-0.5 flex h-[33px] items-start border-b border-[#aaa]">
        <button aria-label="特征树" class="flex h-7 w-[39px] items-center justify-center border-t border-[#808080] pr-0.5 pb-1"><svg class="size-[18px]"><use href="#i-part"/></svg></button>
        <button aria-label="属性" class="flex h-7 w-[41px] items-center justify-center border border-[#808080] bg-[#d3d3d3] pr-0.5 pb-1"><svg class="size-[18px]"><use href="#i-props"/></svg></button>
        <button aria-label="配置" class="flex h-7 w-10 items-center justify-center border border-l-0 border-[#808080] bg-[#d3d3d3] pr-1 pb-1"><svg class="size-5"><use href="#i-config"/></svg></button>
        <button aria-label="尺寸专家" class="flex h-7 w-10 items-center justify-center border border-l-0 border-[#808080] bg-[#d3d3d3] pr-1 pb-1"><svg class="size-[18px]"><use href="#i-target"/></svg></button>
        <button aria-label="外观" class="flex h-7 w-10 items-center justify-center border border-l-0 border-[#808080] bg-[#d3d3d3] pr-1 pb-1"><svg class="size-5"><use href="#i-appear"/></svg></button>
        <button aria-label="展开" class="mt-1.5 mr-1 ml-auto"><svg class="h-3 w-2" viewBox="0 0 8 12"><path d="M1 1l5 5-5 5" fill="none" stroke="#666" stroke-width="2"/></svg></button>
      </div>
      <label class="mr-[3px] ml-[3px] flex h-[30px] items-center border border-[#bbb] pl-px"><svg class="size-5"><use href="#i-filter"/></svg><input type="text" aria-label="过滤器" class="ml-1 w-full"></label>
      <ul class="mr-0.5 border-b-[3px] border-[#2563b5] text-black">
        <li class="flex h-7 items-center gap-1 pl-[3px]"><svg class="size-[18px]"><use href="#i-part"/></svg>零件1&nbsp; (默认&lt;&lt;默认&gt;_显示状态 1&gt;)</li>
        <li class="flex h-7 items-center gap-[5px] pl-1"><svg class="mr-1.5 size-2.5 text-[#555]"><use href="#i-right"/></svg><svg class="size-[18px]"><use href="#i-history"/></svg>History</li>
        <li class="flex h-7 items-center gap-[5px] pl-[25px]"><svg class="size-[18px]"><use href="#i-sensor"/></svg>传感器</li>
        <li class="flex h-7 items-center gap-[5px] pl-1"><svg class="mr-1.5 size-2.5 text-[#555]"><use href="#i-right"/></svg><svg class="size-[18px]"><use href="#i-anno"/></svg>注解</li>
        <li class="flex h-7 items-center gap-[5px] pl-1"><svg class="mr-1.5 size-2.5 text-[#555]"><use href="#i-down"/></svg><svg class="size-[18px]"><use href="#i-bodies"/></svg>实体(2)</li>
        <li class="ml-[45px] flex h-7 w-[105px] items-center gap-[5px] overflow-hidden border border-[#3c7fb1] bg-[#a8c9e5] pl-0.5 whitespace-nowrap"><svg class="size-[18px] shrink-0"><use href="#i-body"/></svg>切除-拉伸3</li>
        <li class="flex h-7 items-center gap-[5px] pl-12"><svg class="size-[18px]"><use href="#i-body"/></svg>实体-移动/复制2</li>
        <li class="flex h-7 items-center gap-[5px] pl-[25px]"><svg class="size-[18px]"><use href="#i-material"/></svg>材质 &lt;未指定&gt;</li>
        <li class="flex h-7 items-center gap-[5px] pl-[25px]"><svg class="size-[18px]"><use href="#i-refplane"/></svg>前视基准面</li>
        <li class="flex h-7 items-center gap-[5px] pl-[25px]"><svg class="size-[18px]"><use href="#i-refplane"/></svg>上视基准面</li>
        <li class="flex h-7 items-center gap-[5px] pl-[25px]"><svg class="size-[18px]"><use href="#i-refplane"/></svg>右视基准面</li>
        <li class="flex h-7 items-center gap-[5px] pl-[25px]"><svg class="size-[18px]"><use href="#i-origin"/></svg>原点</li>
        <li class="flex h-7 items-center gap-[5px] pl-1"><svg class="mr-1.5 size-2.5 text-[#555]"><use href="#i-right"/></svg><svg class="size-[18px]"><use href="#i-boss"/></svg>凸台-拉伸2</li>
        <li class="flex h-7 items-center gap-[5px] pl-1"><svg class="mr-1.5 size-2.5 text-[#555]"><use href="#i-right"/></svg><svg class="size-[18px]"><use href="#i-boss"/></svg>凸台-拉伸3</li>
        <li class="flex h-7 items-center gap-[5px] pl-1"><svg class="mr-1.5 size-2.5 text-[#555]"><use href="#i-right"/></svg><svg class="size-[18px]"><use href="#i-boss"/></svg>凸台-拉伸6</li>
        <li class="flex h-7 items-center gap-[5px] pl-1"><svg class="mr-1.5 size-2.5 text-[#555]"><use href="#i-right"/></svg><svg class="size-[18px]"><use href="#i-cut"/></svg>切除-拉伸2</li>
        <li class="flex h-7 items-center gap-[5px] pl-1"><svg class="mr-1.5 size-2.5 text-[#555]"><use href="#i-right"/></svg><svg class="size-[18px]"><use href="#i-cut"/></svg>切除-拉伸3</li>
        <li class="flex h-7 items-center gap-[5px] pl-[25px]"><svg class="size-[18px]"><use href="#i-movecopy"/></svg>实体-移动/复制1</li>
        <li class="flex h-7 items-center gap-[5px] pl-[25px]"><svg class="size-[18px]"><use href="#i-movecopy"/></svg>实体-移动/复制2</li>
      </ul>
    </aside>

    <!-- 3D viewport -->
    <section class="relative flex-1 overflow-hidden bg-white bg-[linear-gradient(to_bottom,transparent_53%,rgba(255,255,255,0.8)_65%,rgba(255,255,255,1)_76%,rgba(255,255,255,0.95)_88%,rgba(255,255,255,0.75)_100%),radial-gradient(ellipse_24%_60%_at_100%_0%,rgba(242,243,247,0.9),transparent),radial-gradient(ellipse_60%_110%_at_86%_56%,#d6d9e5_0%,#dadde8_30%,#e3e6ee_52%,rgba(247,248,251,0.7)_78%,transparent_100%),linear-gradient(to_bottom,transparent_22%,#f3f4f8_38%,#e4e7ef_48%,#dfe3ec_54%,#dfe3ec_100%)]">
      <!-- model -->
      <div class="absolute top-[99px] left-[1075px] h-[374px] w-[11px] shadow-[0_0_32px_4px_rgba(60,60,70,0.35)]"></div>
      <div class="absolute top-[280px] left-[444px] h-[381px] w-[633px] shadow-[0_2px_36px_0_rgba(0,0,0,0.7)]"></div>
      <div class="absolute top-[99px] left-[1075px] h-[374px] w-[11px] border border-black bg-[#d2d2d2]"></div>
      <div class="absolute top-[280px] left-[444px] h-[381px] w-[632px] border border-[#3d98f2] bg-[#026bd6]">
        <div class="absolute top-[9px] right-0 bottom-[9px] left-[9px] border border-r-0 border-[#4a9ff4]"></div>
        <div class="absolute top-44 left-[49px] h-[27px] w-[532px] rounded-full border border-[#5aa8f4]"></div>
      </div>
      <svg class="absolute top-[277px] left-[611px] h-[9px] w-5" viewBox="0 0 20 9"><path d="M1 1l6 7M7 1L1 8M0 4.500h8M4 0v9" stroke="#00f" stroke-dasharray="2 1"/><path d="M11 1l8 3.500L11 8z" fill="#00f"/></svg>

      <!-- heads-up view toolbar -->
      <nav class="absolute top-[5px] left-[596px] flex items-center text-[#888]">
        <button aria-label="整屏显示全图" class="flex w-[26px] justify-center"><svg class="size-5"><use href="#i-zoomfit"/></svg></button>
        <button aria-label="局部放大" class="flex w-[26px] justify-center"><svg class="size-5"><use href="#i-zoomarea"/></svg></button>
        <button aria-label="上一视图" class="flex w-[26px] justify-center"><svg class="size-5"><use href="#i-prev"/></svg></button>
        <button aria-label="剖面视图" class="flex w-[26px] justify-center"><svg class="size-5"><use href="#i-section"/></svg></button>
        <button aria-label="动态注解视图" class="flex w-[26px] justify-center"><svg class="size-5"><use href="#i-dynview"/></svg></button>
        <button aria-label="视图定向" class="flex w-[39px] items-center gap-1.5 pl-[3px]"><svg class="size-5 shrink-0"><use href="#i-orient"/></svg><svg class="size-1.5 shrink-0"><use href="#i-down"/></svg></button>
        <button aria-label="显示样式" class="flex w-10 items-center gap-1.5 pl-[3px]"><svg class="size-5 shrink-0"><use href="#i-display"/></svg><svg class="size-1.5 shrink-0"><use href="#i-down"/></svg></button>
        <button aria-label="隐藏项目" class="flex w-10 items-center gap-1.5 pl-[3px]"><svg class="size-5 shrink-0"><use href="#i-eye"/></svg><svg class="size-1.5 shrink-0"><use href="#i-down"/></svg></button>
        <button aria-label="编辑外观" class="flex w-[26px] justify-center"><svg class="size-5"><use href="#i-ballpen"/></svg></button>
        <button aria-label="应用布景" class="flex w-10 items-center gap-[7px] pl-[3px]"><svg class="size-5 shrink-0"><use href="#i-scene"/></svg><svg class="size-1.5 shrink-0"><use href="#i-down"/></svg></button>
        <button aria-label="视图设定" class="flex w-10 items-center gap-[7px] pl-[3px]"><svg class="size-5 shrink-0"><use href="#i-monitor"/></svg><svg class="size-1.5 shrink-0"><use href="#i-down"/></svg></button>
      </nav>
      <div class="absolute top-2 right-[13px] flex gap-3 text-[#999]">
        <button aria-label="左窗格"><svg class="size-3.5"><use href="#i-paneL"/></svg></button>
        <button aria-label="右窗格"><svg class="size-3.5"><use href="#i-paneR"/></svg></button>
        <button aria-label="最小化文档"><svg class="size-3.5"><use href="#i-min"/></svg></button>
        <button aria-label="还原文档"><svg class="size-3.5"><use href="#i-restore"/></svg></button>
        <button aria-label="关闭文档"><svg class="size-3.5"><use href="#i-close"/></svg></button>
      </div>

      <!-- task pane -->
      <nav class="absolute top-[59px] right-0 flex w-[33px] flex-col border-t border-l border-[#808080] bg-[#d3d3d3]">
        <button aria-label="资源" class="flex h-[29px] items-center justify-center border-b border-[#808080] bg-[#f9f9f9]"><svg class="size-5"><use href="#i-home"/></svg></button>
        <button aria-label="设计库" class="flex h-[30px] items-center justify-center border-b border-[#808080]"><svg class="size-5"><use href="#i-library"/></svg></button>
        <button aria-label="文件探索器" class="flex h-[30px] items-center justify-center border-b border-[#808080]"><svg class="size-5"><use href="#i-explorer"/></svg></button>
        <button aria-label="视图调色板" class="flex h-[30px] items-center justify-center border-b border-[#808080]"><svg class="size-[18px]"><use href="#i-palette"/></svg></button>
        <button aria-label="外观布景" class="flex h-[30px] items-center justify-center border-b border-[#808080]"><svg class="size-5"><use href="#i-ball"/></svg></button>
        <button aria-label="自定义属性" class="flex h-[30px] items-center justify-center border-b border-[#808080]"><svg class="size-[18px]"><use href="#i-props"/></svg></button>
        <button aria-label="论坛" class="flex h-[30px] items-center justify-center border-b border-[#808080]"><svg class="size-[18px]"><use href="#i-forum"/></svg></button>
      </nav>

      <!-- splitter handle -->
      <div class="absolute top-[409px] left-0 flex h-[39px] w-2 items-center justify-center border border-l-0 border-[#808080] bg-[#f9f9f9]"><span class="size-1.5 rounded-full border border-[#888] bg-[#bbb]"></span></div>

      <!-- view triad -->
      <svg class="absolute bottom-5 left-[38px] size-16" viewBox="0 0 64 64">
        <path d="M12 13h26v-3l10 5.500-10 5.500v-3H12z" fill="#c81414" stroke="#600"/>
        <path d="M14 15.500h24" stroke="#f08080" stroke-width="2"/>
        <path d="M9 19v22H6l6 11 6-11h-3V19z" fill="#1a1ac8" stroke="#006"/>
        <path d="M12 19v22" stroke="#8080f0" stroke-width="2"/>
        <circle cx="12" cy="15" r="6" fill="#124a12"/>
        <text x="12" y="19" text-anchor="middle" font-family="Liberation Serif" font-size="11" fill="#0a0">Y</text>
        <text x="53" y="20" text-anchor="middle" font-family="Liberation Serif" font-size="14" fill="#f00">X</text>
        <text x="12" y="60" text-anchor="middle" font-family="Liberation Serif" font-size="12" fill="#00f">Z</text>
      </svg>
      <p class="absolute bottom-1 left-3 text-base leading-4 font-medium text-black">*上视</p>
    </section>

    <!-- context toolbar -->
    <div class="absolute top-[190px] left-[135px] z-20 flex h-[60px] w-[205px] flex-col gap-1 border border-[#808080] bg-[#f8f8f8] pt-[5px] pl-[5px] shadow-[3px_3px_2px_rgba(0,0,0,0.5)]">
      <button aria-label="编辑特征" class="self-start"><svg class="size-5"><use href="#i-editfeat"/></svg></button>
      <div class="flex items-center gap-1">
        <button aria-label="隐藏"><svg class="size-5"><use href="#i-hide"/></svg></button>
        <button aria-label="放大所选范围"><svg class="size-5"><use href="#i-zoomsel"/></svg></button>
        <button aria-label="正视于"><svg class="size-5"><use href="#i-normal"/></svg></button>
        <button aria-label="外观" class="flex items-center gap-1.5"><svg class="size-5"><use href="#i-ballpen"/></svg><svg class="size-1.5"><use href="#i-down"/></svg></button>
      </div>
    </div>

    <!-- context menu -->
    <div role="menu" class="absolute top-[260px] left-[135px] z-20 flex h-[358px] w-[205px] flex-col border border-[#808080] bg-[#f8f8f8] pt-[3px] shadow-[3px_3px_2px_rgba(0,0,0,0.5)]">
      <h2 class="h-6 border-y border-[#c0c0c0] pl-[3px] leading-[23px] font-bold">实体</h2>
      <button class="flex h-[25px] items-center pl-[45px]">孤立&nbsp;(<u>B</u>)</button>
      <button class="flex h-[25px] items-center pr-3 pl-[45px]">材料<svg class="ml-auto size-2 text-[#555]"><use href="#i-right"/></svg></button>
      <button class="flex h-[25px] items-center pr-3 pl-[45px]">实体显示<svg class="ml-auto size-2 text-[#555]"><use href="#i-right"/></svg></button>
      <button class="flex h-[25px] items-center pl-1.5"><svg class="mr-[21px] size-[18px]"><use href="#i-delbody"/></svg>删除/保留实体...&nbsp;(<u>E</u>)</button>
      <button class="flex h-[25px] items-center pl-[45px]">添加到新文件夹&nbsp;(<u>F</u>)</button>
      <button class="mr-[7px] ml-[3px] flex h-[25px] items-center border border-[#808080] bg-white pl-[41px]">插入到新零件...&nbsp;(<u>G</u>)</button>
      <button class="flex h-[25px] items-center pl-1.5"><svg class="mr-[21px] size-[18px]"><use href="#i-savesel"/></svg>保存选择&nbsp;(<u>H</u>)</button>
      <button class="flex h-[25px] items-center pl-1.5"><svg class="mr-[21px] size-[18px]"><use href="#i-transp"/></svg>更改透明度&nbsp;(<u>J</u>)</button>
      <h2 class="h-[25px] border-y border-[#c0c0c0] pl-[3px] leading-[23px] font-bold">特征 (切除-拉伸3)</h2>
      <button class="flex h-[25px] items-center pl-[45px]">父子关系...&nbsp;(<u>M</u>)</button>
      <hr class="mt-1.5 ml-[39px] border-[#c0c0c0]">
      <button class="my-1.5 flex h-6 items-center pl-[45px]">折叠项目&nbsp;(<u>P</u>)</button>
      <hr class="ml-[39px] border-[#c0c0c0]">
      <button aria-label="展开菜单" class="mt-4 flex justify-center"><svg class="h-2.5 w-2" viewBox="0 0 8 10"><path d="M1 1l3 3 3-3M1 5l3 3 3-3" fill="none" stroke="#111" stroke-width="1.500"/></svg></button>
    </div>

    <!-- red pointer -->
    <svg class="absolute top-[422px] left-[322px] z-30 h-5 w-[82px]" viewBox="0 0 82 20"><path d="M1 9L17 2l-3 5q30 3 67 10.500Q45 17 13 14l2 5z" fill="#fb2414"/></svg>
  </main>

  <!-- model tabs -->
  <nav class="flex h-[21px] shrink-0 border-y border-[#808080] text-base leading-[19px] text-[#444]">
    <div class="ml-0.5 grid w-20 grid-cols-4 divide-x divide-[#8a8ca6] border-t border-black bg-[#a9abc1] text-[#7f819b]">
      <button aria-label="第一个" class="flex items-center justify-center"><svg class="size-3" viewBox="0 0 12 12"><path d="M2 1v10M10 1v10L4 6z" fill="currentColor" stroke="currentColor"/></svg></button>
      <button aria-label="上一个" class="flex items-center justify-center"><svg class="size-3" viewBox="0 0 12 12"><path d="M9 0v12L3 6z" fill="currentColor"/></svg></button>
      <button aria-label="下一个" class="flex items-center justify-center"><svg class="size-3" viewBox="0 0 12 12"><path d="M3 0v12l6-6z" fill="currentColor"/></svg></button>
      <button aria-label="最后一个" class="flex items-center justify-center"><svg class="size-3" viewBox="0 0 12 12"><path d="M10 1v10M2 1v10l6-5z" fill="currentColor" stroke="currentColor"/></svg></button>
    </div>
    <button class="-mt-px w-[61px] bg-[#f7f7f7] pt-px pl-1 text-[17px]">模型</button>
    <button class="w-[78px] border-x border-[#808080] bg-[#d3d3d3]">3D 视图</button>
    <button class="w-[108px] border-r border-[#808080] bg-[#d3d3d3] pr-4">运动算例 1</button>
  </nav>

  <!-- status bar -->
  <footer class="flex h-[23px] shrink-0 items-center border-b-2 border-[#c3cfe4] text-[#444]">
    <span class="pl-px">SOLIDWORKS Premium 2016 x64 版</span>
    <span class="mr-[7px] ml-auto h-5 border-l border-[#ccc]"></span>
    <span class="flex h-5 w-[90px] items-center border-x border-[#ccc] pl-[3px] whitespace-nowrap">在编辑 零件</span>
    <span class="ml-[15px] h-5 border-l border-[#ccc]"></span>
    <button class="ml-9 flex items-center gap-5">自定义<svg class="size-1.5 rotate-180 text-[#222]"><use href="#i-down"/></svg></button>
    <svg class="mr-1 ml-[90px] size-[18px]"><use href="#i-tag"/></svg>
  </footer>
</body>
</html>
